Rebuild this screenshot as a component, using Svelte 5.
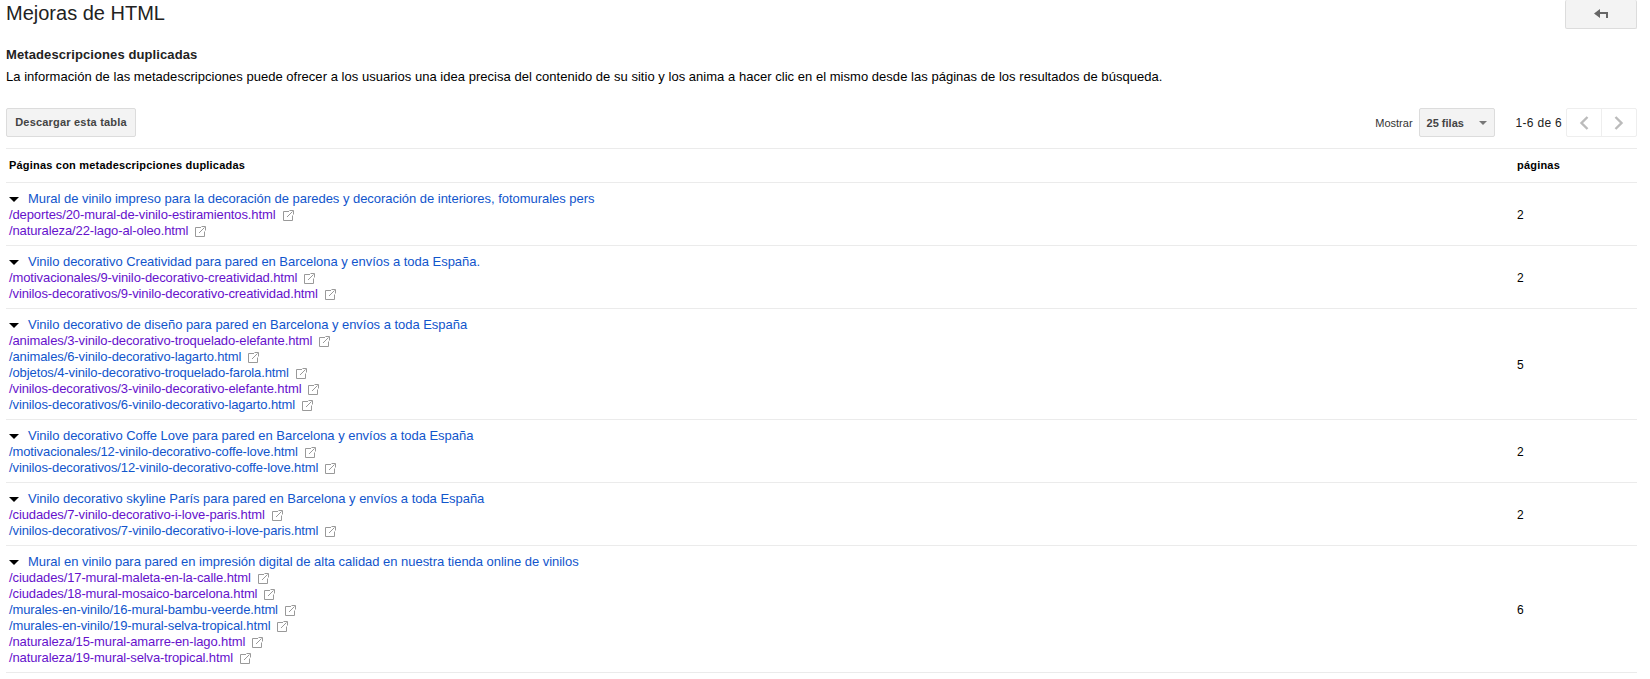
<script>
  const groups = [
    { title: 'Mural de vinilo impreso para la decoración de paredes y decoración de interiores, fotomurales pers', links: [['/deportes/20-mural-de-vinilo-estiramientos.html', true], ['/naturaleza/22-lago-al-oleo.html', true]] },
    { title: 'Vinilo decorativo Creatividad para pared en Barcelona y envíos a toda España.', links: [['/motivacionales/9-vinilo-decorativo-creatividad.html', true], ['/vinilos-decorativos/9-vinilo-decorativo-creatividad.html', true]] },
    { title: 'Vinilo decorativo de diseño para pared en Barcelona y envíos a toda España', links: [['/animales/3-vinilo-decorativo-troquelado-elefante.html', true], ['/animales/6-vinilo-decorativo-lagarto.html', false], ['/objetos/4-vinilo-decorativo-troquelado-farola.html', false], ['/vinilos-decorativos/3-vinilo-decorativo-elefante.html', true], ['/vinilos-decorativos/6-vinilo-decorativo-lagarto.html', false]] },
    { title: 'Vinilo decorativo Coffe Love para pared en Barcelona y envíos a toda España', links: [['/motivacionales/12-vinilo-decorativo-coffe-love.html', false], ['/vinilos-decorativos/12-vinilo-decorativo-coffe-love.html', false]] },
    { title: 'Vinilo decorativo skyline París para pared en Barcelona y envíos a toda España', links: [['/ciudades/7-vinilo-decorativo-i-love-paris.html', true], ['/vinilos-decorativos/7-vinilo-decorativo-i-love-paris.html', false]] },
    { title: 'Mural en vinilo para pared en impresión digital de alta calidad en nuestra tienda online de vinilos', links: [['/ciudades/17-mural-maleta-en-la-calle.html', true], ['/ciudades/18-mural-mosaico-barcelona.html', true], ['/murales-en-vinilo/16-mural-bambu-veerde.html', false], ['/murales-en-vinilo/19-mural-selva-tropical.html', false], ['/naturaleza/15-mural-amarre-en-lago.html', true], ['/naturaleza/19-mural-selva-tropical.html', true]] }
  ];
</script>

<div class="page">
  <div class="top">
    <h1>Mejoras de HTML</h1>
    <button class="back" aria-label="Volver">
      <svg width="14" height="10" viewBox="0 0 14 10"><path d="M0 4.5 L6 0 V3 H14 V9 H12 V5 H6 V9 Z" fill="#666"/></svg>
    </button>
  </div>

  <h2>Metadescripciones duplicadas</h2>
  <p class="intro">La información de las metadescripciones puede ofrecer a los usuarios una idea precisa del contenido de su sitio y los anima a hacer clic en el mismo desde las páginas de los resultados de búsqueda.</p>

  <div class="toolbar">
    <button class="btn">Descargar esta tabla</button>
    <div class="pager">
      <span class="show">Mostrar</span>
      <div class="select">25 filas <span class="caret"></span></div>
      <span class="range">1-6 de 6</span>
      <div class="arrows">
        <span class="arrow">
          <svg width="10" height="14" viewBox="0 0 10 14"><path d="M8.5 1 L2.5 7 L8.5 13" fill="none" stroke="#bbb" stroke-width="2.4"/></svg>
        </span>
        <span class="arrow">
          <svg width="10" height="14" viewBox="0 0 10 14"><path d="M1.5 1 L7.5 7 L1.5 13" fill="none" stroke="#bbb" stroke-width="2.4"/></svg>
        </span>
      </div>
    </div>
  </div>

  <div class="head row">
    <div class="main">Páginas con metadescripciones duplicadas</div>
    <div class="count">páginas</div>
  </div>

  {#each groups as g}
    <div class="row item">
      <div class="main">
        <div class="title"><span class="tri"></span><span>{g.title}</span></div>
        {#each g.links as [link, visited]}
          <div class="link" class:visited>
            <span>{link}</span>
            <svg class="ext" width="11" height="11" viewBox="0 0 11 11"><path d="M6 1.5 H.5 V10.5 H9.5 V5.5" fill="none" stroke="#999"/><path d="M4 7 L9.5 1.5 M6.5 .5 H10.5 V4.5" fill="none" stroke="#999"/></svg>
          </div>
        {/each}
      </div>
      <div class="count">{g.links.length}</div>
    </div>
  {/each}
</div>

<style>
  :global(body) {
    background: #fff;
    font-family: "Liberation Sans", Arial, sans-serif;
  }

  .page {
    padding: 0 13px 0 6px;
    font-size: 13px;
    color: #000;
  }

  .top {
    display: flex;
    justify-content: space-between;
    align-items: flex-start;
    height: 46px;
  }

  h1 {
    margin: 0;
    font-size: 20px;
    font-weight: 400;
    line-height: 26px;
    color: #222;
  }

  .back {
    width: 72px;
    height: 29px;
    padding: 0;
    background: #f3f3f3;
    border: 1px solid #dcdcdc;
    border-top: 0;
    border-radius: 2px;
    display: flex;
    align-items: center;
    justify-content: center;
  }

  h2 {
    margin: 0;
    font-size: 13px;
    font-weight: 700;
    line-height: 17px;
    letter-spacing: 0.1px;
    color: #222;
  }

  .intro {
    margin: 6px 0 0;
    font-size: 13px;
    line-height: 16px;
    letter-spacing: 0.03px;
    color: #000;
  }

  .toolbar {
    display: flex;
    justify-content: space-between;
    align-items: center;
    margin-top: 23px;
    height: 29px;
  }

  .btn {
    height: 29px;
    width: 130px;
    padding: 0 0 2px;
    background: #f3f3f3;
    border: 1px solid #dcdcdc;
    border-radius: 2px;
    font: 700 11px "Liberation Sans", Arial, sans-serif;
    letter-spacing: 0.2px;
    color: #444;
  }

  .pager {
    display: flex;
    align-items: center;
  }

  .show {
    font-size: 11px;
    color: #333;
    margin-right: 6px;
  }

  .select {
    box-sizing: border-box;
    width: 76px;
    height: 29px;
    padding-left: 7px;
    background: #f3f3f3;
    border: 1px solid #dcdcdc;
    border-radius: 2px;
    font-size: 11px;
    font-weight: 700;
    color: #444;
    display: flex;
    align-items: center;
    justify-content: space-between;
  }

  .caret {
    width: 0;
    height: 0;
    margin-right: 7px;
    border: 4px solid transparent;
    border-top: 4px solid #777;
    border-bottom: 0;
  }

  .range {
    margin-left: 21px;
    margin-right: 4px;
    font-size: 12px;
    letter-spacing: 0.3px;
    color: #222;
  }

  .arrows {
    display: flex;
    height: 29px;
    border: 1px solid #eee;
    border-radius: 2px;
    box-sizing: border-box;
  }

  .arrow {
    width: 34px;
    display: flex;
    align-items: center;
    justify-content: center;
  }

  .arrow + .arrow {
    border-left: 1px solid #eee;
  }

  .row {
    display: flex;
    align-items: center;
    border-top: 1px solid #ebebeb;
  }

  .main {
    flex: 1;
    padding-left: 3px;
  }

  .count {
    width: 120px;
    font-size: 12px;
    color: #000;
  }

  .head {
    margin-top: 11px;
    box-sizing: border-box;
    height: 34px;
    padding-bottom: 2px;
    font-size: 11px;
    font-weight: 700;
    letter-spacing: 0.2px;
  }

  .head .count {
    font-size: 11px;
  }

  .item {
    padding: 8px 0 6px;
    line-height: 16px;
  }

  .item:last-child {
    border-bottom: 1px solid #ebebeb;
  }

  .title {
    display: flex;
    align-items: center;
    letter-spacing: -0.03px;
    color: #1155cc;
  }

  .tri {
    width: 0;
    height: 0;
    margin-right: 9px;
    border: 5px solid transparent;
    border-top: 5px solid #000;
    border-bottom: 0;
  }

  .link {
    display: flex;
    align-items: center;
    letter-spacing: -0.11px;
    color: #1155cc;
  }

  .link.visited {
    color: #6611cc;
  }

  .ext {
    margin-left: 7px;
  }
</style>
